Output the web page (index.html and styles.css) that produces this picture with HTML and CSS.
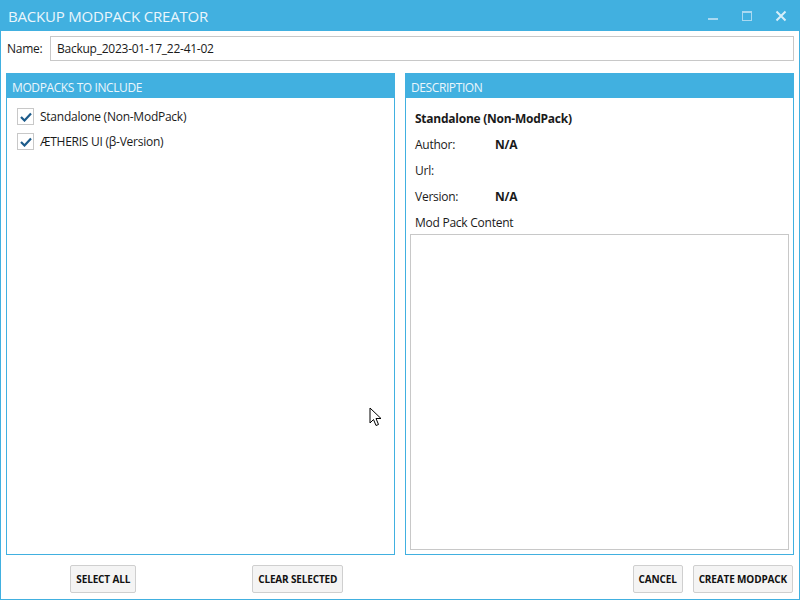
FILE: index.html
```html
<!DOCTYPE html>
<html>
<head>
<meta charset="utf-8">
<link rel="stylesheet" href="styles.css">
</head>
<body>
<div class="window">
  <div class="titlebar">
    <div class="title">BACKUP MODPACK CREATOR</div>
    <div class="controls">
      <svg class="ctl" width="12" height="12" viewBox="0 0 12 12"><rect x="1" y="8" width="10" height="2" fill="#a9d9f1"/></svg>
      <svg class="ctl" width="12" height="12" viewBox="0 0 12 12"><rect x="1.5" y="1.5" width="9" height="9" fill="none" stroke="#a9d9f1" stroke-width="1"/><rect x="1" y="1" width="10" height="2" fill="#a9d9f1"/></svg>
      <svg class="ctl" width="12" height="12" viewBox="0 0 12 12"><path d="M1.5 1.5 L10.5 10.5 M10.5 1.5 L1.5 10.5" stroke="#d6eefa" stroke-width="2"/></svg>
    </div>
  </div>
  <div class="content">
    <div class="namerow">
      <label class="namelabel">Name:</label>
      <div class="nameinput">Backup_2023-01-17_22-41-02</div>
    </div>
    <div class="panels">
      <div class="column">
        <div class="panel">
          <div class="panelhead">MODPACKS TO INCLUDE</div>
          <div class="list">
            <div class="item"><span class="check"><svg width="12" height="10" viewBox="0 0 12 10"><path d="M1 5 L4.5 8.5 L11 1.5" fill="none" stroke="#1c5b8b" stroke-width="2.2"/></svg></span>Standalone (Non-ModPack)</div>
            <div class="item"><span class="check"><svg width="12" height="10" viewBox="0 0 12 10"><path d="M1 5 L4.5 8.5 L11 1.5" fill="none" stroke="#1c5b8b" stroke-width="2.2"/></svg></span>ÆTHERIS UI (β-Version)</div>
          </div>
        </div>
        <div class="btnrow split">
          <div class="half"><button class="btn">SELECT ALL</button></div>
          <div class="half"><button class="btn">CLEAR SELECTED</button></div>
        </div>
      </div>
      <div class="column">
        <div class="panel">
          <div class="panelhead">DESCRIPTION</div>
          <div class="desc">
            <div class="modname">Standalone (Non-ModPack)</div>
            <div class="field"><span class="key">Author:</span><span class="val">N/A</span></div>
            <div class="field"><span class="key">Url:</span><span class="val"></span></div>
            <div class="field"><span class="key">Version:</span><span class="val">N/A</span></div>
            <div class="field"><span class="key">Mod Pack Content</span></div>
            <div class="contentbox"></div>
          </div>
        </div>
        <div class="btnrow right">
          <button class="btn">CANCEL</button>
          <button class="btn">CREATE MODPACK</button>
        </div>
      </div>
    </div>
  </div>
  <svg class="cursor" width="14" height="22" viewBox="0 0 14 22"><path d="M1 1 L1 16 L4.5 12.5 L7 18.5 L9.5 17.5 L7 11.5 L12 11.5 Z" fill="#fff" stroke="#000" stroke-width="1" stroke-linejoin="miter"/></svg>
</div>
</body>
</html>
```
FILE: styles.css
```css
* { box-sizing: border-box; }
html, body { margin: 0; padding: 0; }
body {
  font-family: "Open Sans", "Noto Sans", sans-serif;
  font-size: 12px;
  letter-spacing: -0.25px;
  color: #1a1a1a;
  background: #fff;
}
.window {
  position: relative;
  width: 800px;
  height: 600px;
  border: 1px solid #41b0e0;
  display: flex;
  flex-direction: column;
  background: #fff;
}
.titlebar {
  height: 31px;
  margin: -1px -1px 0 -1px;
  background: #41b0e0;
  display: flex;
  align-items: center;
  justify-content: space-between;
  padding: 0 0 0 8px;
}
.title {
  color: #eaf6fc;
  font-size: 15px;
  letter-spacing: -0.2px;
  padding-top: 1px;
}
.controls {
  display: flex;
  align-items: center;
  gap: 22px;
  padding-right: 13px;
}
.ctl { display: block; }
.content {
  flex: 1;
  display: flex;
  flex-direction: column;
  padding: 5px 5px 0 5px;
}
.namerow {
  display: flex;
  align-items: center;
  height: 25px;
}
.namelabel {
  width: 44px;
  padding-left: 1px;
}
.nameinput {
  flex: 1;
  height: 25px;
  border: 1px solid #c8c8c8;
  padding: 3px 6px;
  line-height: 17px;
}
.panels {
  flex: 1;
  display: flex;
  gap: 10px;
  margin-top: 12px;
}
.column {
  flex: 1;
  display: flex;
  flex-direction: column;
}
.panel {
  height: 482px;
  border: 1px solid #41b0e0;
  display: flex;
  flex-direction: column;
}
.panelhead {
  height: 25px;
  margin: -1px -1px 0 -1px;
  background: #41b0e0;
  color: #eaf6fc;
  padding: 6px 6px 0 6px;
  line-height: 17px;
  letter-spacing: -0.4px;
}
.list { padding: 6px 0 0 10px; }
.item {
  display: flex;
  align-items: center;
  height: 25px;
}
.check {
  width: 17px;
  height: 17px;
  border: 1px solid #c8c8c8;
  display: flex;
  align-items: center;
  justify-content: center;
  margin-right: 6px;
}
.check svg { display: block; }
.desc {
  flex: 1;
  display: flex;
  flex-direction: column;
  padding: 8px 4px 4px 4px;
}
.modname {
  font-weight: bold;
  height: 26px;
  line-height: 26px;
  padding-left: 5px;
}
.field {
  height: 26px;
  line-height: 26px;
  padding-left: 5px;
  display: flex;
}
.key { width: 80px; white-space: nowrap; }
.val { font-weight: bold; }
.contentbox {
  flex: 1;
  border: 1px solid #c8c8c8;
  margin-top: -2px;
}
.btnrow {
  display: flex;
  margin-top: 10px;
  height: 28px;
}
.btnrow.split .half {
  flex: 1;
  display: flex;
  justify-content: center;
}
.btnrow.right {
  justify-content: flex-end;
  gap: 10px;
  padding-right: 1px;
}
.btn {
  height: 28px;
  border: 1px solid #cfcfcf;
  border-radius: 2px;
  background: #f4f4f4;
  font-family: "Open Sans", "Noto Sans", sans-serif;
  font-weight: bold;
  font-size: 10px;
  letter-spacing: -0.15px;
  color: #111;
  padding: 0 5px;
}
.cursor {
  position: absolute;
  left: 368px;
  top: 406px;
}
```
